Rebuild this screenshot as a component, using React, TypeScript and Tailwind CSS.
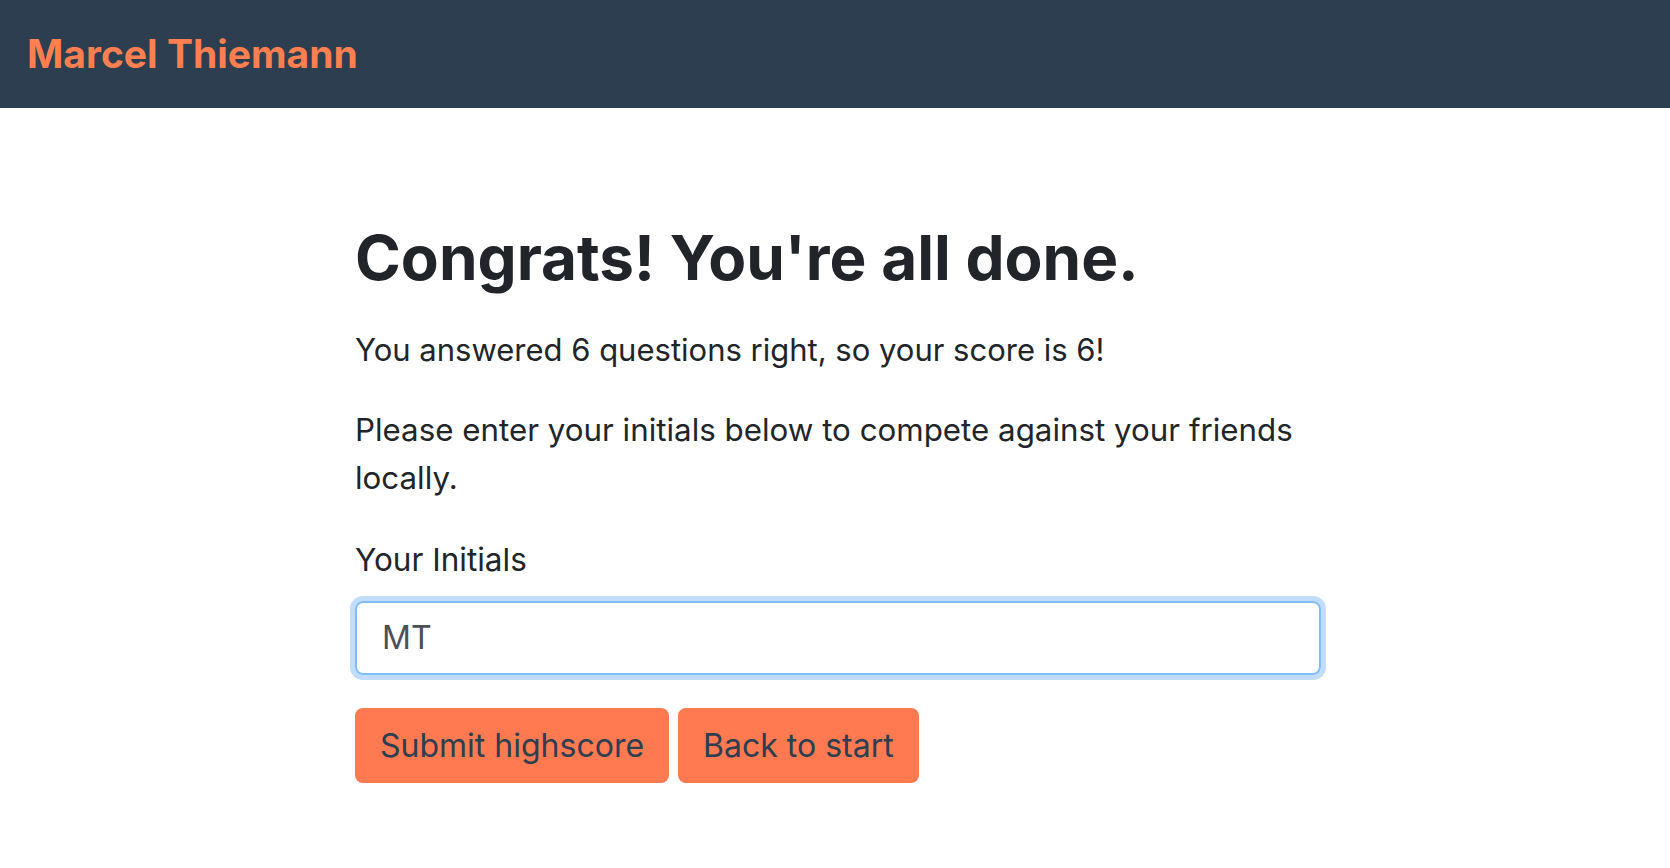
import React from "react";

export default function App() {
  return (
    <div className="min-h-screen bg-white text-[#212529]" style={{ fontFamily: "Inter, 'Noto Sans', sans-serif" }}>
      <header className="h-[108px] bg-[#2c3e50] flex items-center px-[27px]">
        <span className="text-[39px] font-bold text-[#ff7f50]">Marcel Thiemann</span>
      </header>
      <main className="w-[966px] ml-[355px] pt-[114px]">
        <h1 className="text-[62px] leading-[72px] font-bold">Congrats! You're all done.</h1>
        <p className="mt-[32px] text-[31px] leading-[48px]">You answered 6 questions right, so your score is 6!</p>
        <p className="mt-[32px] text-[31.3px] leading-[48px]">Please enter your initials below to compete against your friends locally.</p>
        <label className="block mt-[34px] text-[31.5px] leading-[48px]">Your Initials</label>
        <div className="mt-[17px] h-[74px] rounded-[8px] border-[2px] border-[#80bdff] ring-[5px] ring-[#c2dcfc] flex items-center px-[25px] text-[32px] text-[#495057]">
          MT
        </div>
        <div className="mt-[33px] flex gap-[9px]">
          <button className="h-[75px] px-[25px] rounded-[8px] bg-[#ff7a50] text-[#2c3e50] text-[32px]">Submit highscore</button>
          <button className="h-[75px] px-[25px] rounded-[8px] bg-[#ff7a50] text-[#2c3e50] text-[32px]">Back to start</button>
        </div>
      </main>
    </div>
  );
}
